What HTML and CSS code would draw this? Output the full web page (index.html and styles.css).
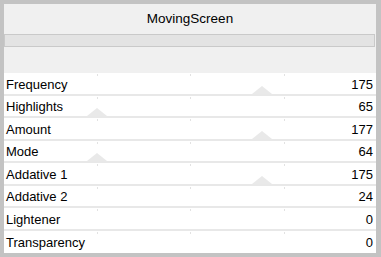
FILE: index.html
```html
<!DOCTYPE html>
<html lang="en">
<head>
    <meta charset="UTF-8">
    <title>MovingScreen</title>
    <link rel="stylesheet" href="styles.css">
</head>
<body>
    <div class="frame">
        <div class="title">MovingScreen</div>
        <div class="bar"></div>
        <div class="spacer"></div>
        <div class="rows">
            <div class="row"><span class="tick t1"></span><span class="tick t2"></span><span class="tick t3"></span><span class="thumb right"></span><span>Frequency</span><span>175</span></div>
            <div class="row"><span class="tick t1"></span><span class="tick t2"></span><span class="tick t3"></span><span class="thumb left"></span><span>Highlights</span><span>65</span></div>
            <div class="row"><span class="tick t1"></span><span class="tick t2"></span><span class="tick t3"></span><span class="thumb right"></span><span>Amount</span><span>177</span></div>
            <div class="row"><span class="tick t1"></span><span class="tick t2"></span><span class="tick t3"></span><span class="thumb left"></span><span>Mode</span><span>64</span></div>
            <div class="row"><span class="tick t1"></span><span class="tick t2"></span><span class="tick t3"></span><span class="thumb right"></span><span>Addative 1</span><span>175</span></div>
            <div class="row"><span class="tick t1"></span><span class="tick t2"></span><span class="tick t3"></span><span>Addative 2</span><span>24</span></div>
            <div class="row"><span class="tick t1"></span><span class="tick t2"></span><span class="tick t3"></span><span>Lightener</span><span>0</span></div>
            <div class="row last"><span class="tick t1"></span><span class="tick t2"></span><span class="tick t3"></span><span>Transparency</span><span>0</span></div>
        </div>
    </div>
</body>
</html>
```

FILE: styles.css
```css
body {
    margin: 0;
    background-color: #c3c3c3;
    font-family: "Liberation Sans", Arial, sans-serif;
    color: #000;
}
.frame {
    margin: 4px 5px 4px 4px;
    background-color: #f0f0f0;
    height: 249px;
}
.title {
    height: 30px;
    line-height: 29px;
    text-align: center;
    font-size: 13.5px;
}
.bar {
    height: 11px;
    border: 1px solid #c9c9c9;
    background-color: #e3e3e3;
    margin-right: 1px;
}
.spacer {
    height: 26px;
}
.rows {
    display: flex;
    flex-direction: column;
}
.row {
    position: relative;
    height: 20.5px;
    border-bottom: 2px solid #e8e8e8;
    background-color: #fff;
    display: flex;
    justify-content: space-between;
    align-items: center;
    padding: 2px 3px 0 2px;
    box-sizing: border-box;
    height: 22.5px;
    font-size: 13px;
}
.row.last {
    border-bottom: none;
}
.thumb {
    position: absolute;
    bottom: 0;
    width: 0;
    height: 0;
    border-left: 10px solid transparent;
    border-right: 10px solid transparent;
    border-bottom: 8px solid #e9e9e9;
}
.thumb.left {
    left: 83px;
}
.thumb.right {
    left: 248px;
}
.tick {
    position: absolute;
    top: 1px;
    width: 1px;
    height: 2px;
    background-color: #e2e2e2;
}
.t1 { left: 93px; }
.t2 { left: 186px; }
.t3 { left: 280px; }
```
